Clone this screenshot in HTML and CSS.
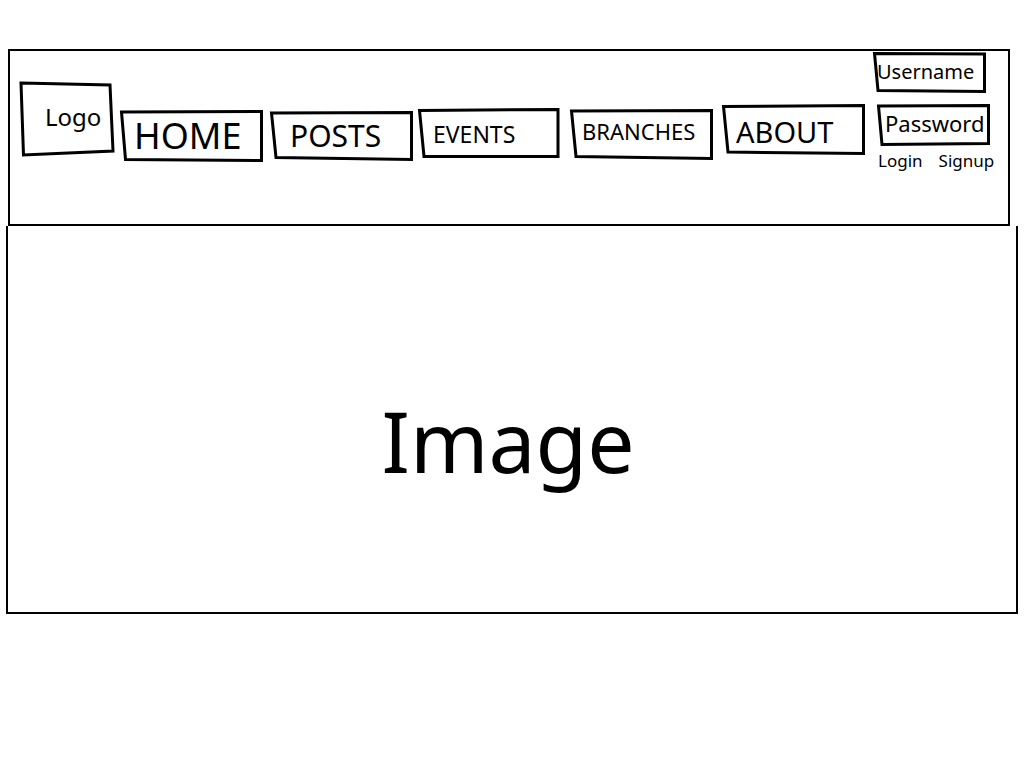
FILE: index.html
```html
<!DOCTYPE html>
<html lang="en">
<head>
    <meta charset="UTF-8">
    <meta name="viewport" content="width=device-width, initial-scale=1.0">
    <title>Wireframe</title>
    <link rel="stylesheet" href="styles.css">
</head>
<body>
    <div class="page">
        <header class="header">
            <div class="sketch logo">
                <svg class="outline" viewBox="0 0 94 74" preserveAspectRatio="none"><polygon points="1,1 90,3 93,69 3.5,73" stroke-width="2"/></svg>
                <span>Logo</span>
            </div>
            <nav class="nav">
                <a class="sketch nav-home" href="#">
                    <svg class="outline" viewBox="0 0 143 52" preserveAspectRatio="none"><polygon points="1.5,2 141.5,1.5 141.5,50.5 5.5,49.5"/></svg>
                    <span>HOME</span>
                </a>
                <a class="sketch nav-posts" href="#">
                    <svg class="outline" viewBox="0 0 143 50" preserveAspectRatio="none"><polygon points="1.5,2 141.5,1.5 141.5,48.5 6,46.5"/></svg>
                    <span>POSTS</span>
                </a>
                <a class="sketch nav-events" href="#">
                    <svg class="outline" viewBox="0 0 142 50" preserveAspectRatio="none"><polygon points="1.5,2.5 140,1.5 140,48.5 6,48.5"/></svg>
                    <span>EVENTS</span>
                </a>
                <a class="sketch nav-branches" href="#">
                    <svg class="outline" viewBox="0 0 143 51" preserveAspectRatio="none"><polygon points="1.5,2 141.5,1.5 141.5,49.5 6,47.5"/></svg>
                    <span>BRANCHES</span>
                </a>
                <a class="sketch nav-about" href="#">
                    <svg class="outline" viewBox="0 0 143 51" preserveAspectRatio="none"><polygon points="1.5,2.5 141.5,1.5 141.5,49.5 6,48"/></svg>
                    <span>ABOUT</span>
                </a>
            </nav>
            <div class="auth">
                <div class="sketch field-user">
                    <svg class="outline" viewBox="0 0 113 41" preserveAspectRatio="none"><polygon points="1.5,1.5 111.5,2 111.5,39.5 5,38.5"/></svg>
                    <span>Username</span>
                </div>
                <div class="sketch field-pass">
                    <svg class="outline" viewBox="0 0 113 42" preserveAspectRatio="none"><polygon points="1.5,2 111.5,1.5 111.5,39.5 5,40.5"/></svg>
                    <span>Password</span>
                </div>
                <div class="auth-links">
                    <a href="#">Login</a>
                    <a href="#">Signup</a>
                </div>
            </div>
        </header>
        <section class="hero">
            <span>Image</span>
        </section>
    </div>
</body>
</html>
```

FILE: styles.css
```css
body {
    margin: 0;
    background: #fff;
    color: #000;
    font-family: 'Noto Sans', 'Open Sans', Arial, sans-serif;
}
a {
    color: #000;
    text-decoration: none;
}
.page {
    padding-top: 49px;
}
.header {
    display: flex;
    align-items: flex-start;
    box-sizing: border-box;
    width: 1002px;
    height: 177px;
    margin-left: 8px;
    padding-left: 10px;
    border: 2px solid #000;
}
.nav {
    display: flex;
    align-items: flex-start;
}
.sketch {
    position: relative;
    display: flex;
    align-items: center;
    box-sizing: border-box;
    line-height: 1.2;
    white-space: nowrap;
}
.sketch span {
    position: relative;
}
.outline {
    position: absolute;
    top: 0;
    left: 0;
    width: 100%;
    height: 100%;
    overflow: visible;
}
.outline polygon {
    fill: none;
    stroke: #000;
    stroke-width: 3;
    stroke-linejoin: miter;
}
.logo {
    width: 94px;
    height: 74px;
    margin-top: 31px;
    padding: 0 0 4px 25px;
    font-size: 24px;
}
.nav-home {
    width: 143px;
    height: 52px;
    margin: 59px 0 0 6px;
    padding-left: 14px;
    font-size: 36px;
}
.nav-posts {
    width: 143px;
    height: 50px;
    margin: 60px 0 0 7px;
    padding-left: 20px;
    font-size: 30px;
}
.nav-events {
    width: 142px;
    height: 50px;
    margin: 57px 0 0 5px;
    padding: 4px 0 0 15px;
    font-size: 23px;
}
.nav-branches {
    width: 143px;
    height: 51px;
    margin: 58px 0 0 10px;
    padding: 0 0 6px 12px;
    font-size: 22px;
}
.nav-about {
    width: 143px;
    height: 51px;
    margin: 53px 0 0 9px;
    padding: 5px 0 0 14px;
    font-size: 29px;
}
.auth {
    display: flex;
    flex-direction: column;
    margin: 1px 0 0 8px;
}
.field-user {
    width: 113px;
    height: 41px;
    padding: 0 0 2px 4px;
    font-size: 20px;
}
.field-pass {
    width: 113px;
    height: 42px;
    margin: 11px 0 0 4px;
    padding: 0 0 4px 8px;
    font-size: 22px;
}
.auth-links {
    display: flex;
    gap: 16px;
    margin: 3px 0 0 5px;
    font-size: 17px;
}
.hero {
    display: flex;
    align-items: center;
    justify-content: center;
    box-sizing: border-box;
    width: 1012px;
    height: 388px;
    margin-left: 6px;
    padding: 42px 8px 0 0;
    border: 2px solid #000;
    border-top: none;
    font-size: 84px;
}
```
